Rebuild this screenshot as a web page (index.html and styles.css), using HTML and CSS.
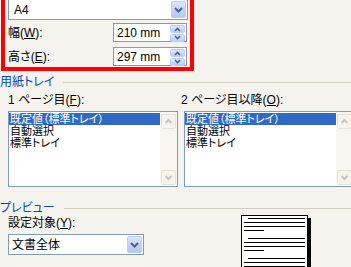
FILE: index.html
```html
<!DOCTYPE html>
<html lang="ja">
<head>
<meta charset="utf-8">
<link rel="stylesheet" href="styles.css">
</head>
<body>
<div class="dialog">
  <div class="paper">
    <div class="combo wide">
      <span class="val">A4</span>
      <span class="ddbtn"><svg width="13" height="15" viewBox="0 0 13 15"><polyline points="3,6 6.5,9.5 10,6" fill="none" stroke="#4D6185" stroke-width="2"/></svg></span>
    </div>
    <div class="row">
      <span class="lbl">幅(<u>W</u>):</span>
      <div class="spin">
        <span class="val">210 mm</span>
        <span class="spinbtns">
          <span class="sb"><svg width="13" height="6" viewBox="0 0 13 6"><polyline points="4,5 6.5,2.5 9,5" fill="none" stroke="#4D6185" stroke-width="1.6"/></svg></span>
          <span class="sb"><svg width="13" height="6" viewBox="0 0 13 6"><polyline points="4,1 6.5,3.5 9,1" fill="none" stroke="#4D6185" stroke-width="1.6"/></svg></span>
        </span>
      </div>
    </div>
    <div class="row">
      <span class="lbl">高さ(<u>E</u>):</span>
      <div class="spin">
        <span class="val">297 mm</span>
        <span class="spinbtns">
          <span class="sb"><svg width="13" height="6" viewBox="0 0 13 6"><polyline points="4,5 6.5,2.5 9,5" fill="none" stroke="#4D6185" stroke-width="1.6"/></svg></span>
          <span class="sb"><svg width="13" height="6" viewBox="0 0 13 6"><polyline points="4,1 6.5,3.5 9,1" fill="none" stroke="#4D6185" stroke-width="1.6"/></svg></span>
        </span>
      </div>
    </div>
  </div>

  <div class="ghead tray-head"><span>用紙トレイ</span><span class="gline"></span></div>
  <div class="trays">
    <div class="tray">
      <div class="tlabel">1 ページ目(<u>F</u>):</div>
      <div class="listbox">
        <div class="items">
          <div class="item sel">既定値（標準トレイ）</div>
          <div class="item">自動選択</div>
          <div class="item">標準トレイ</div>
        </div>
        <div class="scroll">
          <span class="scbtn"><svg width="13" height="13" viewBox="0 0 13 13"><polyline points="3.5,8 6.5,5 9.5,8" fill="none" stroke="#C9C7BA" stroke-width="2"/></svg></span>
          <span class="scbtn"><svg width="13" height="13" viewBox="0 0 13 13"><polyline points="3.5,5 6.5,8 9.5,5" fill="none" stroke="#C9C7BA" stroke-width="2"/></svg></span>
        </div>
      </div>
    </div>
    <div class="tray second">
      <div class="tlabel">2 ページ目以降(<u>O</u>):</div>
      <div class="listbox">
        <div class="items">
          <div class="item sel">既定値（標準トレイ）</div>
          <div class="item">自動選択</div>
          <div class="item">標準トレイ</div>
        </div>
        <div class="scroll">
          <span class="scbtn"><svg width="13" height="13" viewBox="0 0 13 13"><polyline points="3.5,8 6.5,5 9.5,8" fill="none" stroke="#C9C7BA" stroke-width="2"/></svg></span>
          <span class="scbtn"><svg width="13" height="13" viewBox="0 0 13 13"><polyline points="3.5,5 6.5,8 9.5,5" fill="none" stroke="#C9C7BA" stroke-width="2"/></svg></span>
        </div>
      </div>
    </div>
  </div>

  <div class="ghead preview-head"><span>プレビュー</span><span class="gline"></span></div>
  <div class="preview">
    <div class="pleft">
      <div class="plabel">設定対象(<u>Y</u>):</div>
      <div class="combo small">
        <span class="val">文書全体</span>
        <span class="ddbtn"><svg width="13" height="15" viewBox="0 0 13 15"><polyline points="3,6 6.5,9.5 10,6" fill="none" stroke="#4D6185" stroke-width="2"/></svg></span>
      </div>
    </div>
    <div class="page">
      <div class="ln ind"></div>
      <div class="ln"></div>
      <div class="ln"></div>
      <div class="ln short"></div>
      <div class="ln ind para"></div>
      <div class="ln"></div>
      <div class="ln"></div>
      <div class="ln short"></div>
      <div class="ln ind para"></div>
      <div class="ln"></div>
      <div class="ln"></div>
      <div class="ln short"></div>
    </div>
  </div>
</div>
</body>
</html>
```
FILE: styles.css
```css
* { box-sizing: border-box; }

body {
  margin: 0;
  background: #F4F3EE;
  font-family: "Liberation Sans", "Noto Sans CJK JP", sans-serif;
  font-size: 12px;
  line-height: 12px;
  color: #000;
  font-feature-settings: "palt";
}

.dialog {
  width: 351px;
  height: 267px;
  overflow: hidden;
}

u { text-decoration: underline; text-underline-offset: 1px; }

/* red highlighted paper-size box */
.paper {
  margin: -6px 0 0 1px;
  width: 193px;
  border: 4px solid #FF0000;
  padding: 1px 2px 1px 3px;
}

.combo {
  display: flex;
  align-items: center;
  height: 21px;
  background: #fff;
  border: 1px solid #7F9DB9;
  padding: 1px;
}
.combo .val { flex: 1; padding-left: 4px; }
.combo.small { width: 136px; margin-top: 5px; }
.combo.small .val { padding-left: 2px; }

.ddbtn {
  width: 15px;
  height: 17px;
  display: flex;
  align-items: center;
  justify-content: center;
  border: 1px solid #BCCEF7;
  border-radius: 2px;
  background: linear-gradient(180deg, #DCE6FE 0%, #C3D4FB 50%, #B4C8F7 100%);
}

.row {
  display: flex;
  align-items: center;
  justify-content: space-between;
  height: 19px;
  margin-top: 3px;
}
.row + .row { margin-top: 5px; }

.spin {
  display: flex;
  align-items: center;
  width: 74px;
  height: 19px;
  margin-right: 1px;
  background: #fff;
  border: 1px solid #7F9DB9;
  padding: 1px;
}
.spin .val { flex: 1; padding-left: 2px; }
.spinbtns {
  width: 15px;
  height: 15px;
  display: flex;
  flex-direction: column;
  gap: 1px;
}
.sb {
  flex: 1;
  display: flex;
  align-items: center;
  justify-content: center;
  border: 1px solid #BCCEF7;
  border-radius: 2px;
  background: linear-gradient(180deg, #DCE6FE 0%, #B9CCF8 100%);
}

/* group headings */
.ghead {
  display: flex;
  align-items: center;
  height: 12px;
  color: #0046D5;
}
.gline {
  flex: 1;
  height: 1px;
  background: #D0D0BF;
  margin-left: 9px;
}
.tray-head { margin-top: 5px; }
.preview-head { margin-top: 15px; }

/* paper trays */
.trays {
  display: grid;
  grid-template-columns: 173px 1fr;
  padding-left: 8px;
  margin-top: 6px;
}
.tlabel { height: 12px; white-space: nowrap; }
.tray.second .listbox { margin-left: 3px; }

.listbox {
  display: flex;
  width: 170px;
  height: 76px;
  margin-top: 5px;
  background: #fff;
  border: 1px solid #7F9DB9;
}
.items { flex: 1; padding-top: 1px; }
.item {
  height: 12px;
  font-size: 11px;
  line-height: 12px;
  padding-left: 1px;
  white-space: nowrap;
}
.item.sel { background: #316AC5; color: #fff; }

.scroll {
  width: 17px;
  display: flex;
  flex-direction: column;
  justify-content: space-between;
  background: #F7F6F1;
  padding: 2px 1px 1px 1px;
}
.scbtn {
  width: 15px;
  height: 15px;
  display: flex;
  align-items: center;
  justify-content: center;
  border: 1px solid #E6E4DA;
  border-radius: 2px;
  background: #F4F3EC;
}

/* preview */
.preview { display: flex; }
.pleft { padding-left: 8px; }
.plabel { margin-top: 3px; height: 12px; }

.page {
  width: 67px;
  height: 80px;
  margin: 1px 0 0 97px;
  background: #fff;
  border: 1px solid #000;
  box-shadow: 3px 3px 0 #000;
  padding: 2px 2px 0 2px;
}
.ln { height: 1px; background: #000; margin-top: 3px; }
.ln:first-child { margin-top: 0; }
.ln.ind { margin-left: 4px; }
.ln.para { margin-top: 7px; }
.ln.short { width: 20px; }
```
